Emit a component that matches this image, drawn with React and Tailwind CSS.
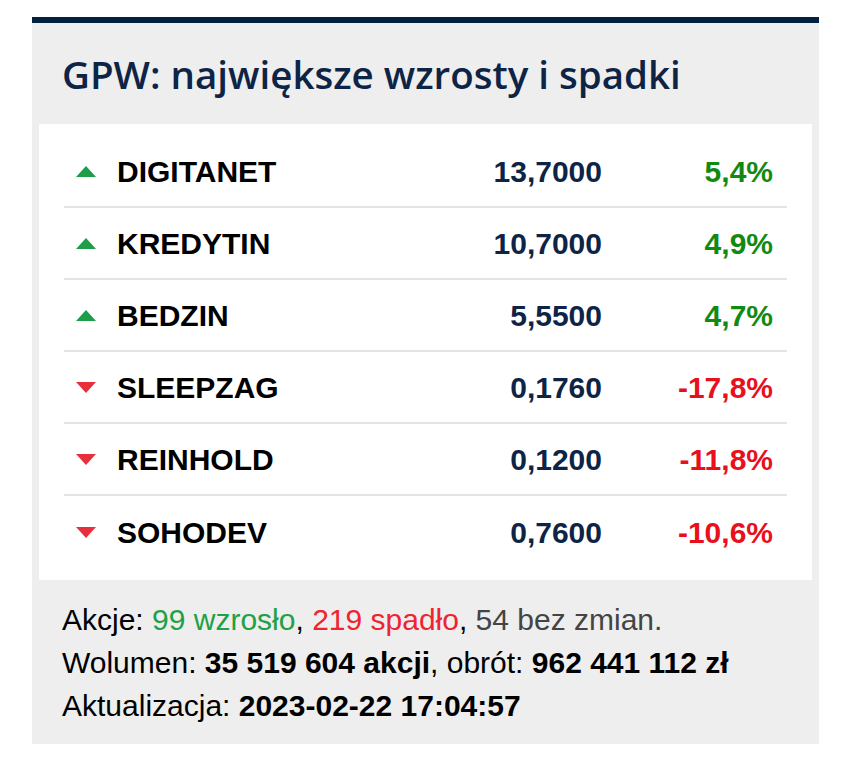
import React from "react";

const rows = [
  { name: "DIGITANET", price: "13,7000", change: "5,4%", up: true },
  { name: "KREDYTIN", price: "10,7000", change: "4,9%", up: true },
  { name: "BEDZIN", price: "5,5500", change: "4,7%", up: true },
  { name: "SLEEPZAG", price: "0,1760", change: "-17,8%", up: false },
  { name: "REINHOLD", price: "0,1200", change: "-11,8%", up: false },
  { name: "SOHODEV", price: "0,7600", change: "-10,6%", up: false },
];

function Arrow({ up }) {
  return (
    <svg width="20" height="11" viewBox="0 0 20 11" className="shrink-0">
      {up ? (
        <polygon points="10,0 20,11 0,11" fill="#1f9e4a" />
      ) : (
        <polygon points="0,0 20,0 10,11" fill="#e8303c" />
      )}
    </svg>
  );
}

export default function App() {
  return (
    <div className="min-h-[758px] bg-white pt-[17px] pl-[32px]">
      <div className="w-[787px] bg-[#eeeeee] border-t-[6px] border-[#00213f]">
        <h2
          className="pl-[30px] pt-[26px] pb-[24px] text-[38.5px] font-semibold leading-[51px] text-[#0d2446]"
          style={{ fontFamily: '"Open Sans", sans-serif' }}
        >
          GPW: największe wzrosty i spadki
        </h2>
        <div className="mx-[7px] bg-white px-[25px] py-[12px]">
          {rows.map((r, i) => (
            <div
              key={r.name}
              className={`flex h-[72px] items-center pl-[12px] pr-[14px] font-bold text-[30px] ${
                i < rows.length - 1 ? "border-b-2 border-[#e4e4e4]" : ""
              }`}
              style={{ fontFamily: '"Liberation Sans", Arial, sans-serif' }}
            >
              <Arrow up={r.up} />
              <span className="ml-[21px] flex-1 text-black">{r.name}</span>
              <span className="w-[200px] text-right text-[#0d2446]">{r.price}</span>
              <span
                className={`w-[171px] text-right ${
                  r.up ? "text-[#118a11]" : "text-[#e8101c]"
                }`}
              >
                {r.change}
              </span>
            </div>
          ))}
        </div>
        <div
          className="px-[30px] pt-[18px] pb-[17px] text-[30px] leading-[43px] text-black"
          style={{ fontFamily: '"Liberation Sans", Arial, sans-serif' }}
        >
          <p>
            Akcje: <span className="text-[#22a045]">99 wzrosło</span>,{" "}
            <span className="text-[#ee2430]">219 spadło</span>,{" "}
            <span className="text-[#444444]">54 bez zmian.</span>
          </p>
          <p>
            Wolumen: <b>35 519 604 akcji</b>, obrót: <b>962 441 112 zł</b>
          </p>
          <p>
            Aktualizacja: <b>2023-02-22 17:04:57</b>
          </p>
        </div>
      </div>
    </div>
  );
}
